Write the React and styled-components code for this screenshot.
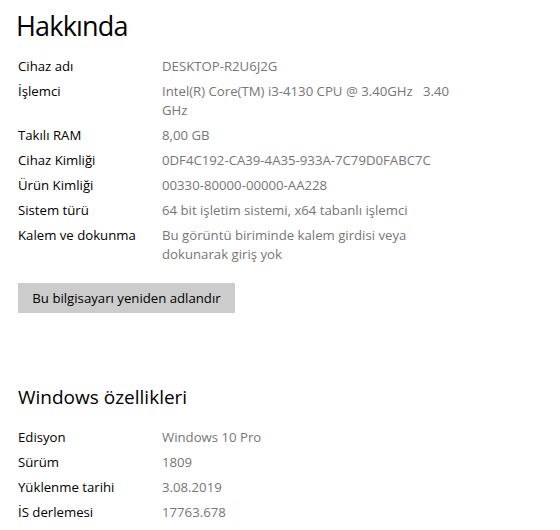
import React from "react"
import styled, { createGlobalStyle } from "styled-components"

const GlobalStyle = createGlobalStyle`
body{
    margin:0;
    background:#fff;
    font-family:"Open Sans","Noto Sans",sans-serif;
}
`

const about = [
    ["Cihaz adı", "DESKTOP-R2U6J2G"],
    ["İşlemci", "Intel(R) Core(TM) i3-4130 CPU @ 3.40GHz   3.40\nGHz"],
    ["Takılı RAM", "8,00 GB"],
    ["Cihaz Kimliği", "0DF4C192-CA39-4A35-933A-7C79D0FABC7C"],
    ["Ürün Kimliği", "00330-80000-00000-AA228"],
    ["Sistem türü", "64 bit işletim sistemi, x64 tabanlı işlemci"],
    ["Kalem ve dokunma", "Bu görüntü biriminde kalem girdisi veya\ndokunarak giriş yok"],
]

const features = [
    ["Edisyon", "Windows 10 Pro"],
    ["Sürüm", "1809"],
    ["Yüklenme tarihi", "3.08.2019"],
    ["İS derlemesi", "17763.678"],
]

const InfoList = ({ rows, top }) => (
    <List $top={top}>
        {rows.map(([label, value]) => (
            <Row key={label}>
                <Label>{label}</Label>
                <Value>{value}</Value>
            </Row>
        ))}
    </List>
)

const App = () => {
    return (
        <Page>
            <GlobalStyle />
            <Title>Hakkında</Title>
            <InfoList rows={about} top={11} />
            <Button>Bu bilgisayarı yeniden adlandır</Button>
            <SubTitle>Windows özellikleri</SubTitle>
            <InfoList rows={features} top={18} />
        </Page>
    )
}

export default App

const Page = styled.div`
width:560px;
height:530px;
overflow:hidden;
padding:6px 0 0 18px;
box-sizing:border-box;
display:flex;
flex-direction:column;
align-items:flex-start;
`

const Title = styled.h1`
margin:0 0 0 -2px;
font-size:27px;
font-weight:400;
line-height:40px;
color:#000;
letter-spacing:-0.8px;
`

const SubTitle = styled.h2`
margin:71px 0 0 0;
font-size:19px;
font-weight:400;
line-height:26px;
color:#000;
`

const List = styled.div`
display:flex;
flex-direction:column;
gap:6px;
margin-top:${p => p.$top}px;
`

const Row = styled.div`
display:grid;
grid-template-columns:144px 320px;
font-size:13.2px;
line-height:19px;
`

const Label = styled.div`
color:#000;
`

const Value = styled.div`
color:#767676;
white-space:pre-wrap;
`

const Button = styled.button`
margin-top:19px;
width:217px;
height:30px;
border:none;
background:#cccccc;
color:#000;
font-family:inherit;
font-size:13.2px;
padding:0;
`
